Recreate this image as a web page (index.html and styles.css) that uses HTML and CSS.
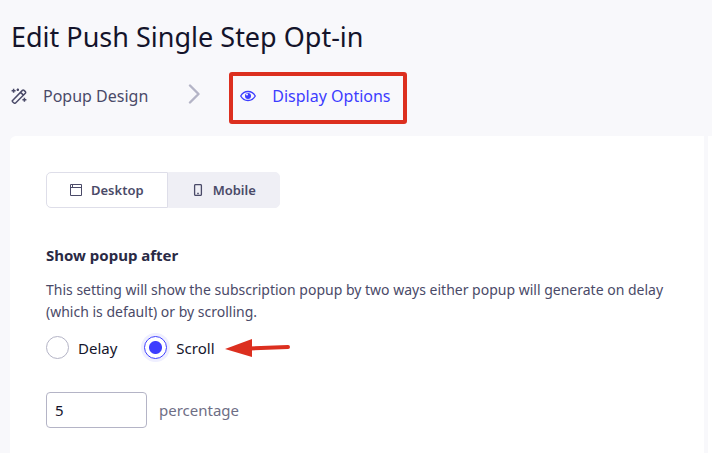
FILE: index.html
```html
<!DOCTYPE html>
<html lang="en">
<head>
    <meta charset="UTF-8">
    <meta name="viewport" content="width=device-width, initial-scale=1.0">
    <title>Edit Push Single Step Opt-in</title>
    <link rel="stylesheet" href="styles.css">
</head>
<body>
    <header class="page-header">
        <h1>Edit Push Single Step Opt-in</h1>
        <nav class="steps">
            <a class="step" href="#design">
                <svg class="step-icon" viewBox="0 0 16 16" fill="none" stroke="currentColor" stroke-width="1.5">
                    <path d="M1.6 12.4 L11.4 2.4 Q12.2 1.7 13 2.4 L14.3 3.6 Q15 4.4 14.3 5.2 L4.6 15 Q3.8 15.6 3 15 L1.6 13.8 Q1 13 1.6 12.4 Z M9.6 4.4 L12.4 7.1"/>
                    <path d="M2.6 .8 V4.8 M.6 2.8 H4.6 M6.8 .6 V3 M5.6 1.8 H8 M13.4 9.8 V13.8 M11.4 11.8 H15.4"/>
                </svg>
                <span>Popup Design</span>
            </a>
            <svg class="chevron" viewBox="0 0 12 20" fill="none" stroke="currentColor" stroke-width="2.4" stroke-linecap="round" stroke-linejoin="round">
                <path d="M2 1.5 L10.5 10 L2 18.5"/>
            </svg>
            <a class="step active" href="#display">
                <svg class="step-icon" viewBox="0 0 16 16" fill="none" stroke="currentColor" stroke-width="1.3">
                    <path d="M.7 8 C4 2 12 2 15.3 8 C12 14 4 14 .7 8 Z"/>
                    <circle cx="8" cy="8" r="3" fill="currentColor" stroke="none"/>
                    <circle cx="7" cy="6.6" r="1" fill="#f8f8fb" stroke="none"/>
                </svg>
                <span>Display Options</span>
            </a>
        </nav>
    </header>

    <main class="panels">
        <section class="panel">
            <div class="tabs">
                <button class="tab selected" type="button">
                    <svg class="tab-icon" viewBox="0 0 12 12" fill="none" stroke="currentColor">
                        <path d="M.5 .5 H11.5 V11.5 H.5 Z M.5 3.5 H11.5 M2.5 .5 V3.5"/>
                    </svg>
                    Desktop
                </button>
                <button class="tab" type="button">
                    <svg class="tab-icon" viewBox="0 0 12 12" fill="none" stroke="currentColor" stroke-width="1.3">
                        <rect x="2.6" y=".6" width="6.8" height="10.8" rx="1"/>
                        <path d="M5.2 9.5 H6.8"/>
                    </svg>
                    Mobile
                </button>
            </div>

            <h2>Show popup after</h2>
            <p class="help">This setting will show the subscription popup by two ways either popup will generate on delay (which is default) or by scrolling.</p>

            <div class="choices">
                <label class="choice"><input type="radio" name="trigger"> Delay</label>
                <label class="choice"><input type="radio" name="trigger" checked> Scroll</label>
                <svg class="arrow" viewBox="0 0 66 20" fill="#dc2f1f">
                    <path d="M0 11 L27 1 V19 Z"/>
                    <path d="M24 10.5 L63 9" stroke="#dc2f1f" stroke-width="4" stroke-linecap="round"/>
                </svg>
            </div>

            <div class="amount">
                <input type="text" id="amount" value="5">
                <label for="amount">percentage</label>
            </div>
        </section>
        <aside class="preview"></aside>
    </main>
</body>
</html>
```
FILE: styles.css
```css
* {
    box-sizing: border-box;
}

body {
    margin: 0;
    min-height: 100vh;
    display: flex;
    flex-direction: column;
    background-color: #f8f8fb;
    color: #4a4a68;
    font-family: "Noto Sans", "Open Sans", sans-serif;
    font-size: 15px;
    line-height: 22px;
}

.page-header {
    padding: 17px 11px 27px;
}

h1 {
    margin: 0 0 26px;
    color: #14142b;
    font-size: 27px;
    font-weight: 400;
    line-height: 40px;
}

.steps {
    display: flex;
    align-items: center;
    height: 26px;
}

.step {
    position: relative;
    display: flex;
    align-items: center;
    gap: 16px;
    color: #4a4a68;
    font-size: 16px;
    text-decoration: none;
}

.step-icon {
    width: 16px;
    height: 16px;
}

.chevron {
    width: 12px;
    height: 20px;
    margin: 0 40px 4px;
    color: #b4b4c6;
}

.active {
    color: #3d3dff;
}

.active::after {
    content: "";
    position: absolute;
    inset: -13px -16px -17px -11px;
    border: 4px solid #dc2f1f;
    border-radius: 3px;
}

.panels {
    flex: 1;
    display: flex;
    gap: 4px;
    padding-left: 10px;
}

.panel {
    flex: 1;
    padding: 36px 36px 24px;
    border-radius: 6px 0 0 0;
    background-color: white;
}

.preview {
    width: 4px;
    background-color: white;
}

.tabs {
    display: flex;
}

.tab {
    display: flex;
    align-items: center;
    gap: 9px;
    height: 36px;
    padding: 0 23px;
    border: 1px solid #efeff5;
    border-radius: 0 5px 5px 0;
    background-color: #efeff5;
    color: #4a4a68;
    font: inherit;
    font-size: 13px;
    font-weight: 600;
    cursor: pointer;
}

.selected {
    border-color: #dedee9;
    border-radius: 5px 0 0 5px;
    background-color: white;
}

.tab-icon {
    width: 12px;
    height: 12px;
}

h2 {
    margin: 36px 0 13px;
    color: #2a2a45;
    font-size: 15px;
    font-weight: 700;
    line-height: 22px;
}

.help {
    margin: 0;
    font-size: 14px;
}

.choices {
    display: flex;
    align-items: center;
    margin: 13px 0 33px;
    color: #14142b;
}

.choice {
    display: flex;
    align-items: center;
    gap: 9px;
    margin-right: 27px;
}

.choice input {
    appearance: none;
    width: 23px;
    height: 23px;
    margin: 0;
    border: 1px solid #b4b4c6;
    border-radius: 50%;
}

.choice input:checked {
    border-color: #3d3dff;
    background: radial-gradient(circle, #3d3dff 6px, white 7px);
    box-shadow: 0 0 0 3px #efefff;
}

.arrow {
    width: 66px;
    height: 20px;
    margin-left: -17px;
}

.amount {
    display: flex;
    align-items: center;
    gap: 12px;
}

.amount input {
    width: 101px;
    height: 36px;
    padding: 0 8px;
    border: 1px solid #b4b4c6;
    border-radius: 4px;
    background-color: white;
    color: #14142b;
    font: inherit;
}

.amount label {
    color: #6e6e85;
}
```
